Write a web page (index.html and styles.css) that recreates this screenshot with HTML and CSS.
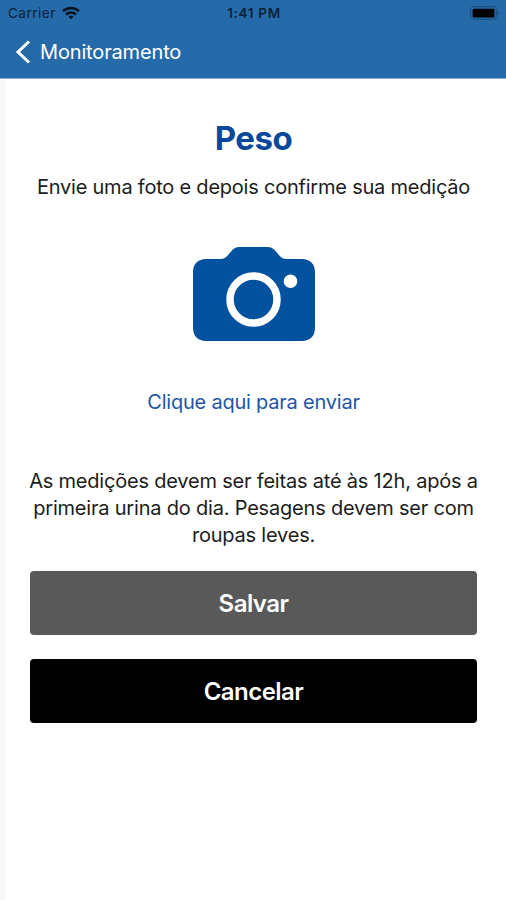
FILE: index.html
```
<!DOCTYPE html>
<html lang="pt-BR">
<head>
  <meta charset="UTF-8">
  <meta name="viewport" content="width=device-width, initial-scale=1.0">
  <title>Peso</title>
  <link rel="stylesheet" href="styles.css">
</head>
<body>
  <header class="header">
    <!-- Status Bar -->
    <div class="status-bar">
      <div class="carrier">
        <span>Carrier</span>
        <svg class="wifi" width="18" height="14" viewBox="0 0 18 14" fill="none" stroke="#06121e" stroke-width="2.5">
          <path d="M1 5.2a11.4 11.4 0 0 1 16 0"/>
          <path d="M4 8.5a7.2 7.2 0 0 1 10 0"/>
          <path d="M6.5 10.7a3.7 3.7 0 0 1 5 0L9 13.3z" fill="#06121e" stroke="none"/>
        </svg>
      </div>
      <span class="time">1:41 PM</span>
      <svg class="battery" width="30" height="14" viewBox="0 0 30 14">
        <rect x="0.7" y="0.7" width="25.6" height="12.6" rx="3" fill="none" stroke="#1c507e" stroke-width="1.2"/>
        <rect x="2.6" y="2.8" width="21.8" height="8.6" rx="1" fill="#000"/>
        <path d="M27.3 4.6q2 .8 2 2.4t-2 2.4z" fill="#1c507e"/>
      </svg>
    </div>

    <!-- Navigation -->
    <a class="back" href="#">
      <svg width="16" height="24" viewBox="0 0 16 24" fill="none" stroke="#fff" stroke-width="3">
        <path d="M14 1.5L3 12l11 10.5"/>
      </svg>
      <span>Monitoramento</span>
    </a>
  </header>

  <main class="content">
    <h1>Peso</h1>
    <p class="subtitle">Envie uma foto e depois confirme sua medição</p>

    <svg class="camera" width="124" height="96" viewBox="0 0 124 96">
      <path d="M14 13h14c4 0 6-1.500 8.500-4.500l3-3.500c3-3.500 5-4 9-4h26c4 0 6 .5 9 4l3 3.500C89 11.500 91 13 95 13h15c8 0 13 5 13 13v56c0 8-5 13-13 13H14C6 95 1 90 1 82V26c0-8 5-13 13-13z" fill="#03529f"/>
      <circle cx="61.500" cy="53.500" r="23.500" fill="none" stroke="#fff" stroke-width="7.500"/>
      <circle cx="98.500" cy="35.200" r="6.800" fill="#fff"/>
    </svg>

    <a class="upload-link" href="#">Clique aqui para enviar</a>

    <p class="info">As medições devem ser feitas até às 12h, após a primeira urina do dia. Pesagens devem ser com roupas leves.</p>

    <div class="buttons">
      <button type="button" class="save">Salvar</button>
      <button type="button" class="cancel">Cancelar</button>
    </div>
  </main>
</body>
</html>
```

FILE: styles.css
```
* {
  box-sizing: border-box;
}

body {
  font-family: Inter, "Liberation Sans", sans-serif;
  margin: 0;
  min-height: 900px;
  color: #1c1c1c;
  background: linear-gradient(to right, #f7f7f7 3px, #ffffff 8px);
}

a {
  text-decoration: none;
}

.header {
  height: 79px;
  background-color: #256baa;
  border-bottom: 1px solid #8fb0d0;
}

/* Status Bar */
.status-bar {
  display: grid;
  grid-template-columns: 1fr auto 1fr;
  align-items: center;
  height: 26px;
  padding: 0 6px 0 8px;
  font-size: 13.5px;
  color: #0b2238;
}

.carrier {
  display: flex;
  align-items: center;
  gap: 6px;
  letter-spacing: 0.5px;
}

.time {
  font-weight: 600;
  font-size: 13.5px;
  letter-spacing: 0.7px;
}

.battery {
  justify-self: end;
}

.back {
  display: flex;
  align-items: center;
  gap: 9px;
  height: 52px;
  padding-left: 15px;
  font-size: 20px;
  letter-spacing: -0.15px;
  color: #ffffff;
}

/* Content */
.content {
  display: flex;
  flex-direction: column;
  align-items: center;
  padding: 39px 29px 0 30px;
  text-align: center;
  font-size: 20px;
  letter-spacing: -0.22px;
}

h1 {
  margin: 0;
  font-size: 33px;
  line-height: 40px;
  letter-spacing: -0.5px;
  color: #07489b;
}

.subtitle {
  margin: 16px 0 0;
  line-height: 27px;
}

.camera {
  margin-top: 45px;
}

.upload-link {
  margin-top: 47px;
  line-height: 27px;
  color: #1f56a5;
}

.info {
  margin: 52px -10px 0;
  width: 460px;
  line-height: 27px;
  letter-spacing: -0.2px;
}

.buttons {
  display: flex;
  flex-direction: column;
  gap: 24px;
  width: 100%;
  margin-top: 22px;
}

button {
  height: 64px;
  border: none;
  border-radius: 4px;
  font-family: inherit;
  font-size: 24px;
  font-weight: 600;
  letter-spacing: -0.55px;
  color: #ffffff;
  cursor: pointer;
}

.save {
  background-color: #595959;
}

.cancel {
  background-color: #000000;
}
```
